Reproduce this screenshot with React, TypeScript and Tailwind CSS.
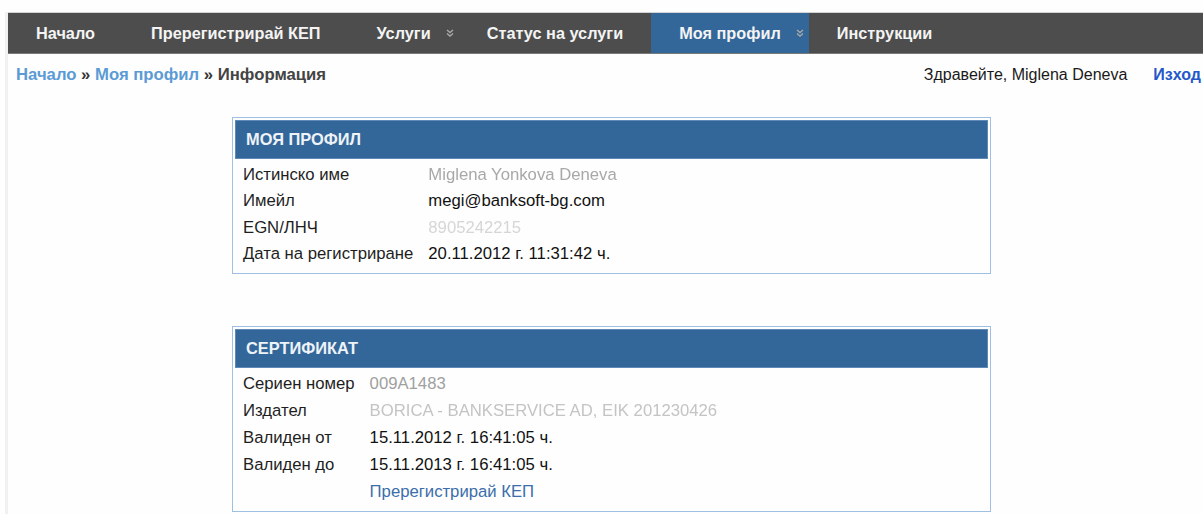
import React from 'react';

type Row = { label: string; value: React.ReactNode; tone?: string };

const NavChevron: React.FC = () => (
  <svg className="ml-[15px] w-[8px] h-[8px]" viewBox="0 0 8 8" fill="none" stroke="#a9a9a9" strokeWidth="1.4">
    <path d="M1 1l3 2.5L7 1" />
    <path d="M1 4.5l3 2.5L7 4.5" />
  </svg>
);

const navItems = [
  { label: 'Начало' },
  { label: 'Пререгистрирай КЕП' },
  { label: 'Услуги', dropdown: true },
  { label: 'Статус на услуги' },
  { label: 'Моя профил', dropdown: true, active: true },
  { label: 'Инструкции' },
];

const Panel: React.FC<{ title: string; rows: Row[]; rowClass: string }> = ({ title, rows, rowClass }) => (
  <div className="border border-[#9fc0e2] p-[2px] pb-[6px]">
    <div className="h-[39px] bg-[#336699] border border-[#5f8ab8] flex items-center pl-[10px]">
      <span className="text-[16.4px] font-bold text-[#eef3f8]">{title}</span>
    </div>
    <div className="grid grid-cols-[auto_1fr] gap-x-[15px] pl-[8px] pt-[2px]">
      {rows.map((r, i) => (
        <React.Fragment key={i}>
          <div className={`${rowClass} flex items-center text-[16.7px] text-[#1e1e1e]`}>{r.label}</div>
          <div className={`${rowClass} flex items-center text-[16.7px] ${r.tone ?? 'text-[#111]'}`}>{r.value}</div>
        </React.Fragment>
      ))}
    </div>
  </div>
);

const App: React.FC = () => {
  const profileRows: Row[] = [
    { label: 'Истинско име', value: 'Miglena Yonkova Deneva', tone: 'text-[#a8a8a8] blur-[0.4px]' },
    { label: 'Имейл', value: 'megi@banksoft-bg.com' },
    { label: 'EGN/ЛНЧ', value: '8905242215', tone: 'text-[#d6d6d6] blur-[0.4px]' },
    { label: 'Дата на регистриране', value: '20.11.2012 г. 11:31:42 ч.' },
  ];

  const certRows: Row[] = [
    { label: 'Сериен номер', value: '009A1483', tone: 'text-[#a0a0a0]' },
    { label: 'Издател', value: 'BORICA - BANKSERVICE AD, EIK 201230426', tone: 'text-[#c4c4c4] blur-[0.4px]' },
    { label: 'Валиден от', value: '15.11.2012 г. 16:41:05 ч.' },
    { label: 'Валиден до', value: '15.11.2013 г. 16:41:05 ч.' },
    { label: '', value: <a href="#" className="text-[#3b6eaa]">Пререгистрирай КЕП</a> },
  ];

  return (
    <div className="w-[1203px] h-[514px] overflow-hidden bg-[#fefefe] pt-[10px] pl-[5px] font-['Liberation_Sans',Arial,sans-serif]">
      <div className="w-[1198px] h-[520px] border-l-[3px] border-[#f1f1f1]">
        {/* Top menu */}
        <nav className="mt-[2px] h-[42px] border-t border-[#d4d4d4] border-b border-b-[#7a7a7a] bg-[#4d4d4d] flex items-stretch">
          {navItems.map((item) => (
            <div
              key={item.label}
              className={`flex items-center pl-[28px] ${item.dropdown ? 'pr-[5px]' : 'pr-[28px]'} ${item.active ? 'bg-[#336699]' : ''}`}
            >
              <span className="text-[16.3px] font-bold text-[#f4f4f4]">{item.label}</span>
              {item.dropdown && <NavChevron />}
            </div>
          ))}
        </nav>

        {/* Breadcrumb + user */}
        <div className="mt-[10px] h-[22px] flex items-center justify-between pl-[8px] pr-[2px]">
          <div className="font-bold text-[16.7px]">
            <a href="#" className="text-[#5b9bd5]">Начало</a>
            <span className="text-[#333]"> » </span>
            <a href="#" className="text-[#5b9bd5]">Моя профил</a>
            <span className="text-[#333]"> » </span>
            <span className="text-[#444]">Информация</span>
          </div>
          <div className="flex items-center gap-[26px] text-[16px]">
            <span className="text-[#1a1a1a]">Здравейте, Miglena Deneva</span>
            <a href="#" className="font-bold text-[#2457c9]">Изход</a>
          </div>
        </div>

        {/* Panels */}
        <div className="ml-[224px] w-[759px] mt-[31px] flex flex-col gap-[52px]">
          <Panel title="МОЯ ПРОФИЛ" rows={profileRows} rowClass="h-[26.5px]" />
          <Panel title="СЕРТИФИКАТ" rows={certRows} rowClass="h-[27px]" />
        </div>
      </div>
    </div>
  );
};

export default App;
